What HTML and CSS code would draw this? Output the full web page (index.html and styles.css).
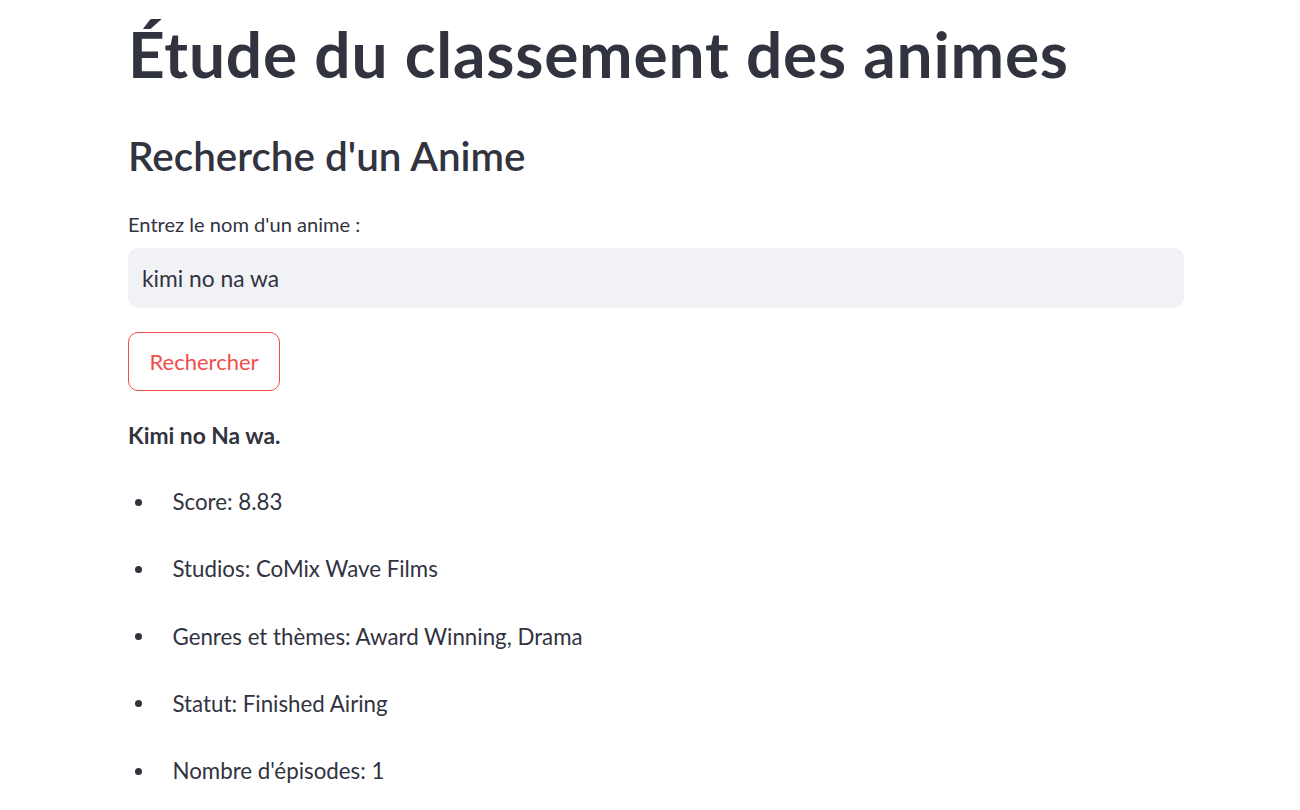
FILE: index.html
```html
<!DOCTYPE html>
<html lang="fr">
<head>
<meta charset="utf-8">
<title>Étude du classement des animes</title>
<link rel="stylesheet" href="styles.css">
</head>
<body>
<main class="main">
  <h1 class="title">Étude du classement des animes</h1>
  <h2 class="subtitle">Recherche d'un Anime</h2>
  <label class="field-label" for="q">Entrez le nom d'un anime :</label>
  <input class="text-input" id="q" type="text" value="kimi no na wa">
  <div class="button-row">
    <button class="btn" type="button">Rechercher</button>
  </div>
  <p class="result-title">Kimi no Na wa.</p>
  <ul class="facts">
    <li>Score: 8.83</li>
    <li>Studios: CoMix Wave Films</li>
    <li>Genres et thèmes: Award Winning, Drama</li>
    <li>Statut: Finished Airing</li>
    <li>Nombre d'épisodes: 1</li>
  </ul>
</main>
</body>
</html>
```
FILE: styles.css
```css
* { box-sizing: border-box; }

html, body {
  margin: 0;
  padding: 0;
  background: #ffffff;
}

body {
  font-family: "Lato", "Open Sans", sans-serif;
  color: #31333f;
}

.main {
  width: 1056px;
  margin-left: 128px;
  padding-top: 16px;
  display: flex;
  flex-direction: column;
  align-items: stretch;
}

.title {
  margin: 0;
  font-size: 64px;
  line-height: 76px;
  font-weight: 700;
  letter-spacing: 0.8px;
}

.subtitle {
  margin: 38px 0 0;
  font-size: 40.4px;
  line-height: 52px;
  font-weight: 600;
}

.field-label {
  margin-top: 28px;
  font-size: 20.1px;
  line-height: 28px;
  font-weight: 400;
}

.text-input {
  margin-top: 10px;
  height: 60px;
  width: 100%;
  border: none;
  outline: none;
  border-radius: 10px;
  background: #f0f2f6;
  padding: 0 14px;
  font-family: "Lato", "Open Sans", sans-serif;
  font-size: 22.8px;
  color: #31333f;
}

.button-row {
  margin-top: 24px;
  display: flex;
}

.btn {
  height: 59px;
  padding: 0 20.5px;
  border: 1px solid #f04d4d;
  border-radius: 10px;
  background: #ffffff;
  color: #f04d4d;
  font-family: "Lato", "Open Sans", sans-serif;
  font-size: 22px;
  font-weight: 400;
  cursor: pointer;
}

.result-title {
  margin: 29px 0 0;
  font-size: 22.8px;
  line-height: 30px;
  font-weight: 700;
}

.facts {
  list-style: none;
  margin: 37px 0 0;
  padding: 0;
}

.facts li {
  display: flex;
  align-items: center;
  font-size: 22.3px;
  line-height: 30px;
  margin-bottom: 37.25px;
}

.facts li::before {
  content: "";
  flex: none;
  width: 7px;
  height: 7px;
  border-radius: 50%;
  background: #31333f;
  margin-left: 6.5px;
  margin-right: 31px;
}
```
